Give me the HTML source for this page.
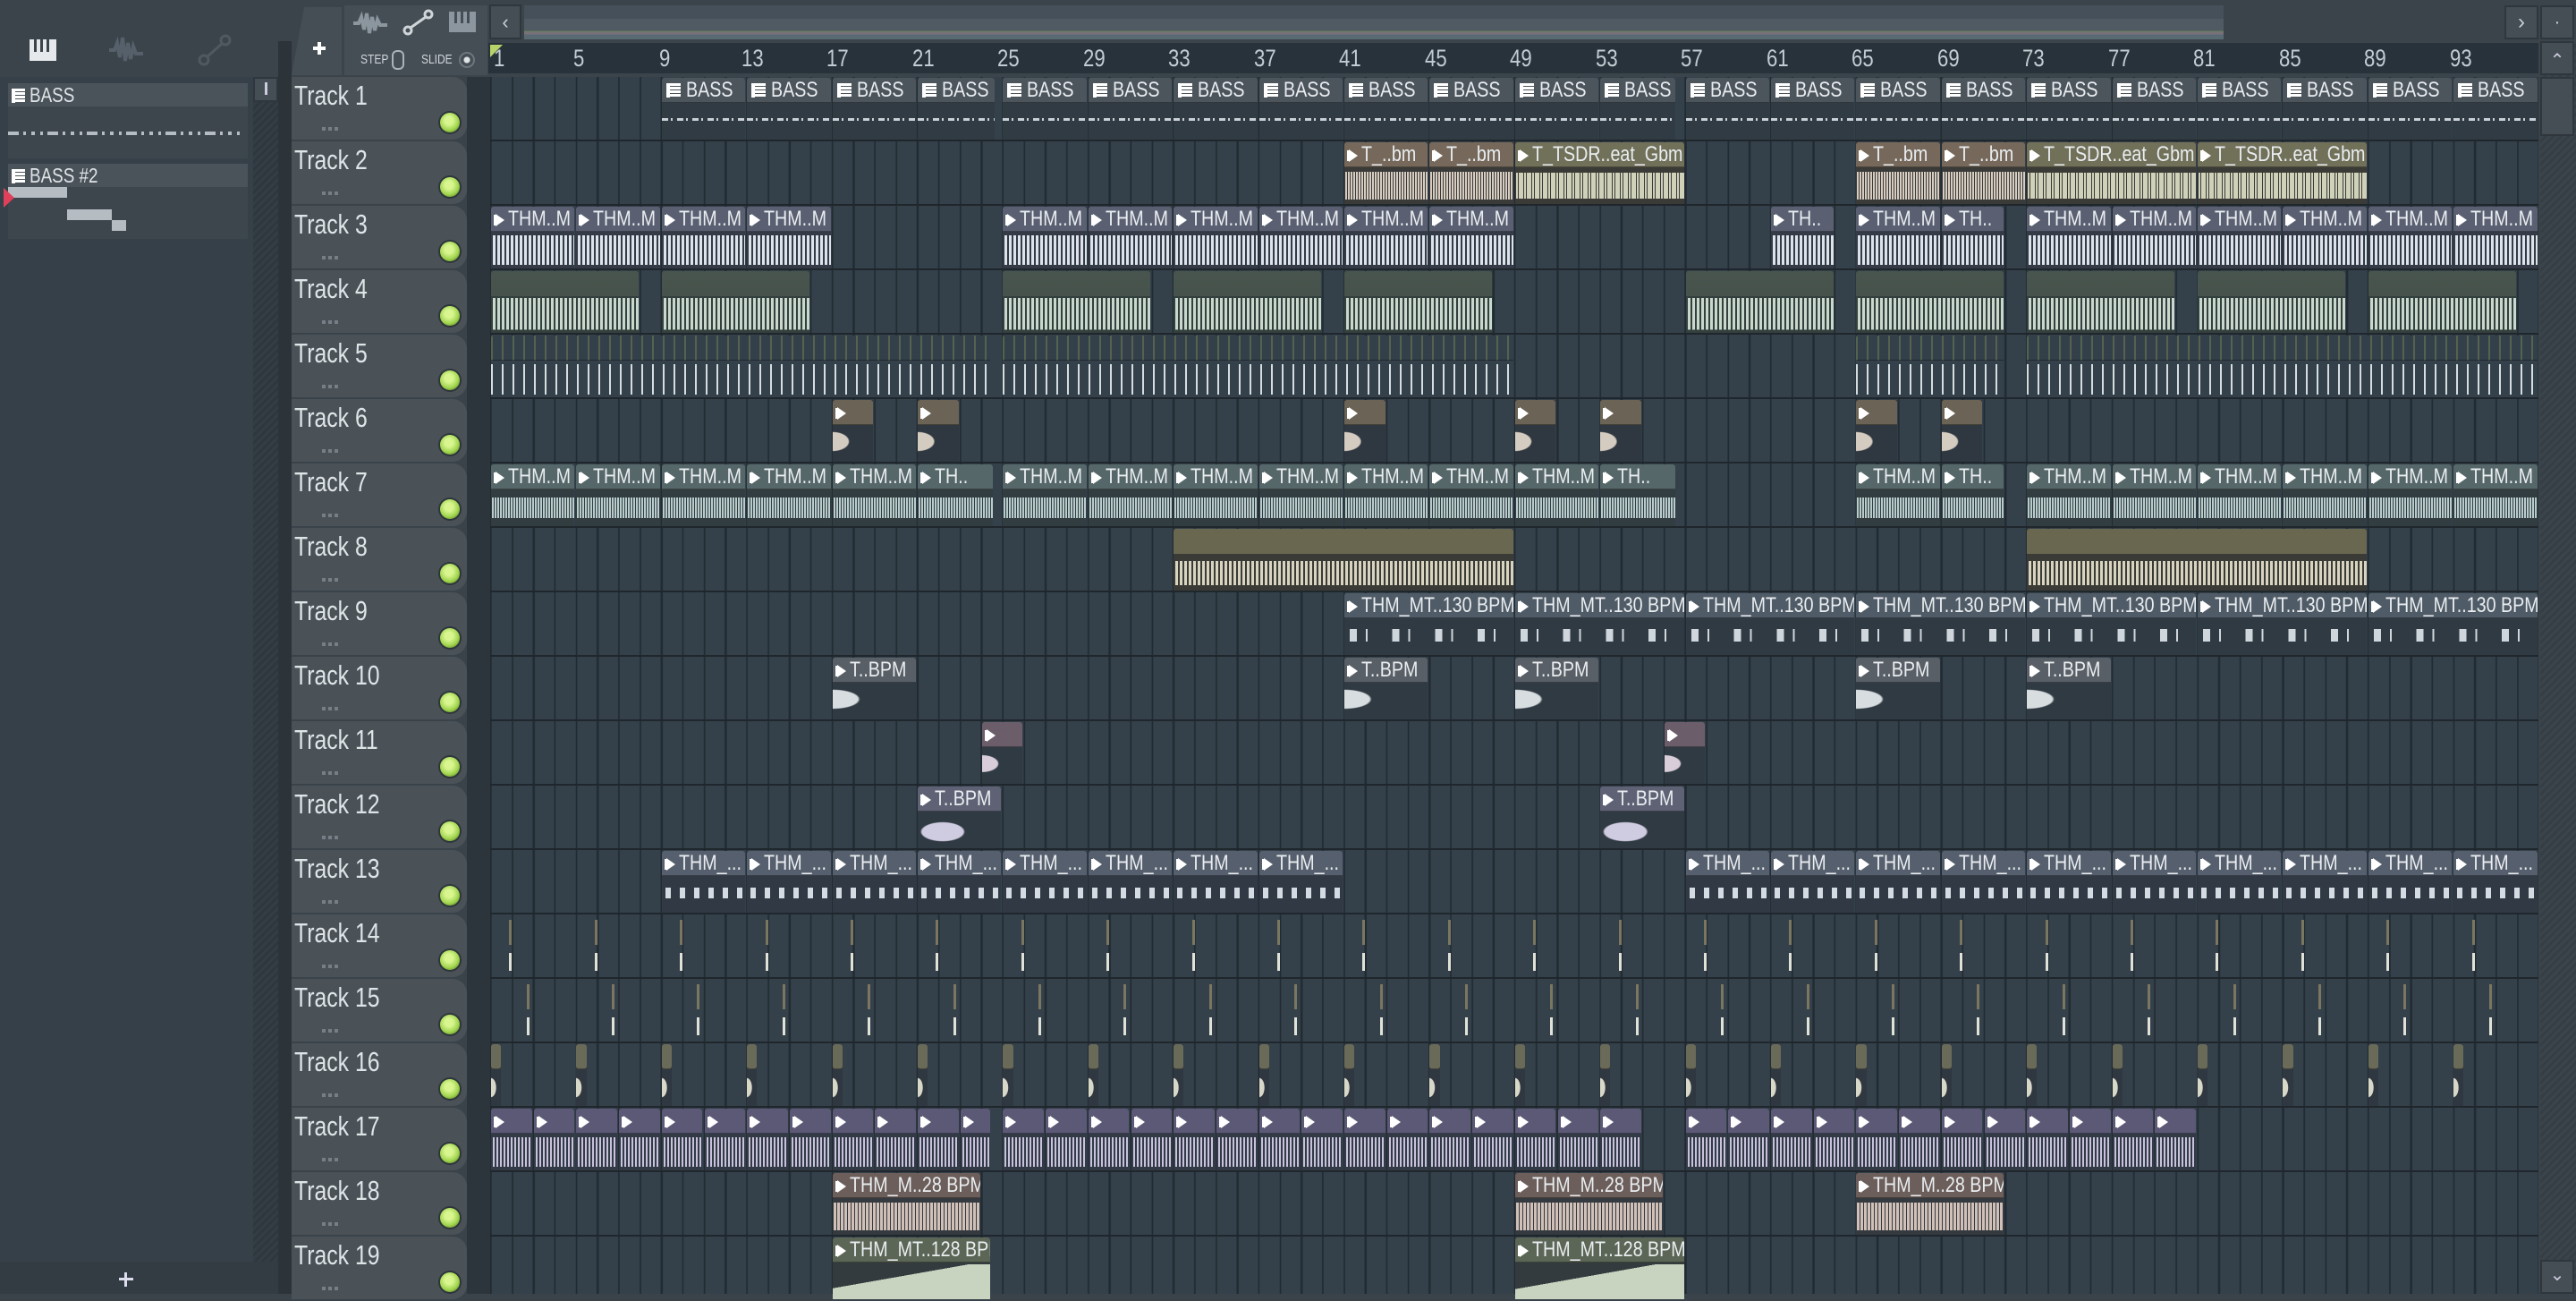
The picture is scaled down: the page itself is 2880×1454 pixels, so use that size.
<!DOCTYPE html>
<html><head><meta charset="utf-8"><style>
*{margin:0;padding:0;box-sizing:border-box}
body{width:2880px;height:1446px;overflow:hidden;background:#3a434a;font-family:"Liberation Sans",sans-serif;position:relative}
.abs{position:absolute}
.top{left:0;top:0;width:2880px;height:86px;background:#3b444b}
.ruler{left:546px;top:48px;width:2292px;height:34px;background:#28323a}
.ruler span{position:absolute;top:2px;font-size:27px;color:#c3ccd3;transform:scaleX(.82);transform-origin:0 0}
.ov{left:586px;top:6px;width:1900px;height:38px;background:linear-gradient(180deg,#45505a 0 40%,#4f5a62 40% 75%,#6d7a66 75% 80%,#7a6f80 80% 85%,#5a6a72 85%);}
.btn{background:#454e55;border:2px solid #2f373d}
.grid{left:546px;top:86px;width:2292px;height:1360px;background-color:#34414b;
background-image:repeating-linear-gradient(180deg,transparent 0 70px,#1f262c 70px 72px),repeating-linear-gradient(90deg,#222b32 0 2px,transparent 2px 23.85px);background-position:0 0,2px 0}
.lcol{left:522px;top:86px;width:26px;height:1360px;background:#2c353c}
.th{position:absolute;left:326px;width:196px;height:70px;background:#4a5258;border-radius:0 16px 16px 0}
.th em{position:absolute;left:3px;top:3px;font-style:normal;font-size:31px;color:#dfe4e7;transform:scaleX(.8);transform-origin:0 0;white-space:nowrap}
.th i{position:absolute;left:166px;top:40px;width:22px;height:22px;border-radius:50%;background:radial-gradient(circle at 45% 40%,#d8f590 0 25%,#9fd44c 60%,#6f9a30 80%);box-shadow:0 0 0 2px #2e363c}
.th u{position:absolute;left:34px;top:56px;width:18px;height:4px;background:repeating-linear-gradient(90deg,#777f86 0 4px,transparent 4px 7px)}
.r{position:absolute;left:548px;width:2290px;height:72px;overflow:hidden}
.c{position:absolute;top:1px;height:69px;left:calc((var(--b) - 1)*23.85px + 1px);width:calc(var(--w)*23.85px - 2px);display:block;font-style:normal;background:var(--bg,#2f3942)}
.c b{position:relative;z-index:2;display:block;height:28px;background:var(--h);border-radius:3px 3px 0 0;font-weight:normal;color:#e9edf0;font-size:24px;line-height:28px;white-space:nowrap;overflow:hidden;padding-left:5px;border-bottom:1px solid rgba(0,0,0,.35)}
.c b s{display:inline-block;text-decoration:none;transform:scaleX(.82);transform-origin:0 50%}
.a b::before{content:"";display:inline-block;width:0;height:0;border-left:10px solid #fff;border-top:7px solid transparent;border-bottom:7px solid transparent;margin-right:4px;vertical-align:-1px;box-shadow:-3px 0 0 -1px #fff}
.p b::before{content:"";display:inline-block;width:12px;height:16px;margin-right:6px;vertical-align:-1px;background:repeating-linear-gradient(180deg,#fff 0 3px,#4c545c 3px 4px);border-left:4px solid #fff}
.c::after{content:"";position:absolute;left:0;right:0;top:28px;bottom:0;background:var(--wv)}
.p{--h:#4c545c;--bg:#313b44;--wv:repeating-linear-gradient(90deg,#c9d0d6 0 7px,transparent 7px 10px,#c9d0d6 10px 12px,transparent 12px 17px) 0 17px/100% 3px no-repeat}
.k2b{--h:#76695b;--bg:#3a3a39;--wv:repeating-linear-gradient(90deg,#3a3a39 0 1px,transparent 1px 3px),linear-gradient(180deg,#3a3a39 12%,#d6ccc0 12% 88%,#3a3a39 88%)}
.k2o{--h:#717059;--bg:#3a3b37;--wv:repeating-linear-gradient(90deg,#3a3b37 0 1px,transparent 1px 3px,#3a3b37 3px 4px,transparent 4px 9px),linear-gradient(180deg,#3a3b37 15%,#cfd1b9 15% 85%,#3a3b37 85%)}
.k3{--h:#5a6072;--bg:#343b47;--wv:repeating-linear-gradient(90deg,#343b47 0 2px,transparent 2px 5px),linear-gradient(180deg,#343b47 10%,#dde3ea 10% 90%,#343b47 90%)}
.k4{--h:linear-gradient(180deg,#48554e,#46524b);--bg:#34403e;--wv:repeating-linear-gradient(90deg,#34403e 0 2px,transparent 2px 5px),linear-gradient(180deg,#34403e 5%,#c8d8cc 5% 92%,#34403e 92%)}
.k4 b,.k8 b{border:0}
.k5{--h:repeating-linear-gradient(90deg,#55624f 0 2px,#33404a 2px 12px);--bg:#34414b;--wv:repeating-linear-gradient(90deg,#d5dde0 0 2px,transparent 2px 12px) 0 4px/100% 34px no-repeat}
.k6{--h:#6b6355;--bg:#2f3740;--wv:radial-gradient(ellipse 70% 45% at 0 45%,#d4ccc0 55%,transparent 60%)}
.k7{--h:#56676a;--bg:#323d42;--wv:repeating-linear-gradient(90deg,#323d42 0 1px,transparent 1px 3px),linear-gradient(180deg,#323d42 22%,#b9cccc 22% 78%,#323d42 78%)}
.k8{--h:#6a6750;--bg:#3a3b36;--wv:repeating-linear-gradient(90deg,#3a3b36 0 2px,transparent 2px 5px),linear-gradient(180deg,#3a3b36 20%,#d8d4c0 20% 85%,#3a3b36 85%)}
.k9{--h:#4f5b66;--bg:#303a43;--wv:repeating-linear-gradient(90deg,transparent 0 6px,#cfd6dc 6px 14px,transparent 14px 24px,#cfd6dc 24px 26px,transparent 26px 47.7px) 0 12px/100% 14px no-repeat}
.k10{--h:#595f66;--bg:#303a43;--wv:radial-gradient(ellipse 55% 45% at 0 45%,#d8dde0 55%,transparent 60%)}
.k11{--h:#6b5e6a;--bg:#303a43;--wv:radial-gradient(ellipse 70% 40% at 0 45%,#d8cdd8 55%,transparent 60%)}
.k12{--h:#5f6275;--bg:#303a43;--wv:radial-gradient(ellipse 45% 45% at 30% 55%,#cfcbe0 55%,transparent 60%)}
.k13{--h:#565f6d;--bg:#313a44;--wv:repeating-linear-gradient(90deg,transparent 0 4px,#d4dbe2 4px 10px,transparent 10px 16px) 0 13px/100% 12px no-repeat}
.k16{--h:#6a6a58;--bg:#2f3740;--wv:radial-gradient(ellipse 90% 45% at 0 50%,#d8d8c8 55%,transparent 60%)}
.k16 b{border-radius:3px}
.k17{--h:#5b5975;--bg:#323a46;--wv:repeating-linear-gradient(90deg,#323a46 0 2px,transparent 2px 4px),linear-gradient(180deg,#323a46 10%,#c8c2dc 10% 90%,#323a46 90%)}
.k18{--h:#6c5e5a;--bg:#343a3f;--wv:repeating-linear-gradient(90deg,#343a3f 0 1px,transparent 1px 4px),linear-gradient(180deg,#343a3f 12%,#d0c0b8 12% 88%,#343a3f 88%)}
.k19{--h:#5c6656;--bg:#343b3e;--wv:linear-gradient(170deg,#343b3e 0 40%,transparent 40%),linear-gradient(180deg,#343b3e 5%,#c8d4c0 5%)}
.sp{position:absolute;top:6px;height:62px;width:3px;left:calc((var(--b) - 1)*23.85px);background:linear-gradient(180deg,#7a7660 0 45%,transparent 45% 60%,#e0e2d8 60% 92%,transparent 92%)}
.lp{left:0;top:86px;width:284px;height:1324px;background:#364048}
.ph{position:absolute;left:9px;width:268px;height:26px;background:#4b535a;color:#dfe4e7;font-size:23px;line-height:26px;padding-left:4px}
.ph s{display:inline-block;text-decoration:none;transform:scaleX(.82);transform-origin:0 50%}
.ph::before{content:"";display:inline-block;width:11px;height:16px;margin-right:5px;vertical-align:-1px;background:repeating-linear-gradient(180deg,#fff 0 3px,#4c545c 3px 4px);border-left:4px solid #fff}
.pb{position:absolute;left:9px;width:268px;height:58px;background:#3d464d}
</style></head><body>
<div class="abs top"></div>
<div class="abs" style="left:33px;top:44px;width:30px;height:24px;background:#e6e9eb"></div>
<div class="abs" style="left:38px;top:44px;width:3px;height:14px;background:#3b444b"></div>
<div class="abs" style="left:45px;top:44px;width:3px;height:14px;background:#3b444b"></div>
<div class="abs" style="left:52px;top:44px;width:3px;height:14px;background:#3b444b"></div>
<svg class="abs" style="left:120px;top:38px" width="46" height="36"><path d="M2 18h6l3-8 3 16 3-22 3 26 3-20 3 18 3-14 3 8h8" stroke="#56606a" stroke-width="4" fill="none"/></svg>
<svg class="abs" style="left:220px;top:38px" width="40" height="36"><circle cx="8" cy="29" r="5" stroke="#4f5960" stroke-width="3" fill="none"/><circle cx="32" cy="7" r="5" stroke="#4f5960" stroke-width="3" fill="none"/><path d="M11 26L29 10" stroke="#4f5960" stroke-width="3"/></svg>
<div class="abs" style="left:326px;top:8px;width:56px;height:76px;background:#454e55;border-radius:14px 0 0 0;clip-path:polygon(25% 0,100% 0,100% 100%,0 100%)"></div>
<div class="abs" style="left:350px;top:52px;width:14px;height:4px;background:#fff"></div>
<div class="abs" style="left:355px;top:47px;width:4px;height:14px;background:#fff"></div>
<div class="abs" style="left:385px;top:6px;width:160px;height:78px;background:#454e55"></div>
<svg class="abs" style="left:393px;top:10px" width="42" height="32"><path d="M2 16h6l3-7 3 14 3-18 3 22 3-18 3 15 3-12 3 6h8" stroke="#8c969e" stroke-width="4" fill="none"/></svg>
<svg class="abs" style="left:450px;top:10px" width="36" height="30"><circle cx="6" cy="24" r="4" stroke="#cfd5d9" stroke-width="3" fill="none"/><circle cx="29" cy="6" r="4" stroke="#cfd5d9" stroke-width="3" fill="none"/><path d="M9 21L26 9" stroke="#cfd5d9" stroke-width="3"/></svg>
<div class="abs" style="left:502px;top:13px;width:30px;height:23px;background:#8c969e"></div>
<div class="abs" style="left:508px;top:13px;width:3px;height:13px;background:#454e55"></div>
<div class="abs" style="left:515px;top:13px;width:3px;height:13px;background:#454e55"></div>
<div class="abs" style="left:522px;top:13px;width:3px;height:13px;background:#454e55"></div>
<div class="abs" style="left:403px;top:58px;font-size:15px;color:#cfd5d9;transform:scaleX(.8);transform-origin:0 0">STEP</div>
<div class="abs" style="left:438px;top:56px;width:14px;height:22px;border:2px solid #aab3ba;border-radius:6px"></div>
<div class="abs" style="left:471px;top:58px;font-size:15px;color:#cfd5d9;transform:scaleX(.8);transform-origin:0 0">SLIDE</div>
<div class="abs" style="left:513px;top:58px;width:18px;height:18px;border:2px solid #6c767d;border-radius:50%;background:radial-gradient(#dfe4e7 0 3px,#454e55 4px)"></div>
<div class="abs btn" style="left:547px;top:5px;width:36px;height:39px;color:#ccd;font-size:22px;text-align:center;line-height:36px">&#8249;</div>
<div class="abs ov"></div>
<div class="abs" style="left:2486px;top:6px;width:314px;height:38px;background:#3b444b"></div>
<div class="abs btn" style="left:2800px;top:6px;width:38px;height:38px;color:#ccd;font-size:24px;text-align:center;line-height:34px">&#8250;</div>
<div class="abs btn" style="left:2840px;top:6px;width:38px;height:38px;color:#ccd;font-size:20px;text-align:center;line-height:34px">&#183;</div>
<div class="abs ruler">
<span style="left:6px">1</span><span style="left:95px">5</span><span style="left:191px">9</span><span style="left:283px">13</span><span style="left:378px">17</span><span style="left:474px">21</span><span style="left:569px">25</span><span style="left:665px">29</span><span style="left:760px">33</span><span style="left:856px">37</span><span style="left:951px">41</span><span style="left:1047px">45</span><span style="left:1142px">49</span><span style="left:1238px">53</span><span style="left:1333px">57</span><span style="left:1429px">61</span><span style="left:1524px">65</span><span style="left:1620px">69</span><span style="left:1715px">73</span><span style="left:1811px">77</span><span style="left:1906px">81</span><span style="left:2002px">85</span><span style="left:2097px">89</span><span style="left:2193px">93</span>
</div>
<div class="abs" style="left:548px;top:50px;width:0;height:0;border-left:14px solid #b6d46a;border-bottom:14px solid transparent"></div>
<div class="abs" style="left:2840px;top:46px;width:40px;height:1400px;background:repeating-linear-gradient(135deg,#353e45 0 3px,#3b444b 3px 6px)"></div>
<div class="abs btn" style="left:2840px;top:46px;width:38px;height:38px;color:#ccd;font-size:20px;text-align:center;line-height:40px">&#8963;</div>
<div class="abs btn" style="left:2840px;top:86px;width:38px;height:66px"></div>
<div class="abs btn" style="left:2840px;top:1408px;width:38px;height:38px;color:#ccd;font-size:20px;text-align:center;line-height:30px">&#8964;</div>
<div class="abs lp">
<div class="ph" style="top:7px"><s>BASS</s></div>
<div class="pb" style="top:33px"><div class="abs" style="left:0;top:28px;width:262px;height:4px;background:repeating-linear-gradient(90deg,#b5bcc2 0 12px,transparent 12px 17px,#b5bcc2 17px 20px,transparent 20px 26px,#b5bcc2 26px 30px,transparent 30px 36px,#b5bcc2 36px 39px,transparent 39px 44px)"></div></div>
<div class="ph" style="top:97px"><s>BASS #2</s></div>
<div class="pb" style="top:123px">
<div class="abs" style="left:0;top:0;width:66px;height:12px;background:#b5bcc2"></div>
<div class="abs" style="left:66px;top:25px;width:50px;height:12px;background:#b5bcc2"></div>
<div class="abs" style="left:116px;top:37px;width:16px;height:12px;background:#b5bcc2"></div>
</div>
<div class="abs" style="left:4px;top:124px;width:0;height:0;border-left:12px solid #e0405a;border-top:11px solid transparent;border-bottom:11px solid transparent"></div>
</div>
<div class="abs" style="left:283px;top:86px;width:28px;height:1324px;background:repeating-linear-gradient(135deg,#2e373e 0 3px,#343d44 3px 6px)"></div>
<div class="abs btn" style="left:283px;top:86px;width:28px;height:28px"></div>
<div class="abs" style="left:296px;top:92px;width:3px;height:14px;background:#ccd"></div>
<div class="abs" style="left:0;top:1410px;width:320px;height:36px;background:#333c43"></div>
<div class="abs" style="left:133px;top:1428px;width:16px;height:3px;background:#dde"></div>
<div class="abs" style="left:139px;top:1422px;width:3px;height:16px;background:#dde"></div>
<div class="abs" style="left:311px;top:46px;width:15px;height:1400px;background:#2c343a"></div>
<div class="abs grid"></div>
<div class="abs lcol"></div>

<div class="th" style="top:86px"><em>Track 1</em><u></u><i></i></div>
<div class="th" style="top:158px"><em>Track 2</em><u></u><i></i></div>
<div class="th" style="top:230px"><em>Track 3</em><u></u><i></i></div>
<div class="th" style="top:302px"><em>Track 4</em><u></u><i></i></div>
<div class="th" style="top:374px"><em>Track 5</em><u></u><i></i></div>
<div class="th" style="top:446px"><em>Track 6</em><u></u><i></i></div>
<div class="th" style="top:518px"><em>Track 7</em><u></u><i></i></div>
<div class="th" style="top:590px"><em>Track 8</em><u></u><i></i></div>
<div class="th" style="top:662px"><em>Track 9</em><u></u><i></i></div>
<div class="th" style="top:734px"><em>Track 10</em><u></u><i></i></div>
<div class="th" style="top:806px"><em>Track 11</em><u></u><i></i></div>
<div class="th" style="top:878px"><em>Track 12</em><u></u><i></i></div>
<div class="th" style="top:950px"><em>Track 13</em><u></u><i></i></div>
<div class="th" style="top:1022px"><em>Track 14</em><u></u><i></i></div>
<div class="th" style="top:1094px"><em>Track 15</em><u></u><i></i></div>
<div class="th" style="top:1166px"><em>Track 16</em><u></u><i></i></div>
<div class="th" style="top:1238px"><em>Track 17</em><u></u><i></i></div>
<div class="th" style="top:1310px"><em>Track 18</em><u></u><i></i></div>
<div class="th" style="top:1382px"><em>Track 19</em><u></u><i></i></div>

<div class="r" style="top:86px">
<i class="c p" style="--b:9;--w:4"><b><s>BASS</s></b></i><i class="c p" style="--b:13;--w:4"><b><s>BASS</s></b></i><i class="c p" style="--b:17;--w:4"><b><s>BASS</s></b></i><i class="c p" style="--b:21;--w:3.7"><b><s>BASS</s></b></i>
<i class="c p" style="--b:25;--w:4"><b><s>BASS</s></b></i><i class="c p" style="--b:29;--w:4"><b><s>BASS</s></b></i><i class="c p" style="--b:33;--w:4"><b><s>BASS</s></b></i><i class="c p" style="--b:37;--w:4"><b><s>BASS</s></b></i><i class="c p" style="--b:41;--w:4"><b><s>BASS</s></b></i><i class="c p" style="--b:45;--w:4"><b><s>BASS</s></b></i><i class="c p" style="--b:49;--w:4"><b><s>BASS</s></b></i><i class="c p" style="--b:53;--w:3.6"><b><s>BASS</s></b></i>
<i class="c p" style="--b:57;--w:4"><b><s>BASS</s></b></i><i class="c p" style="--b:61;--w:4"><b><s>BASS</s></b></i><i class="c p" style="--b:65;--w:4"><b><s>BASS</s></b></i><i class="c p" style="--b:69;--w:4"><b><s>BASS</s></b></i><i class="c p" style="--b:73;--w:4"><b><s>BASS</s></b></i><i class="c p" style="--b:77;--w:4"><b><s>BASS</s></b></i><i class="c p" style="--b:81;--w:4"><b><s>BASS</s></b></i><i class="c p" style="--b:85;--w:4"><b><s>BASS</s></b></i><i class="c p" style="--b:89;--w:4"><b><s>BASS</s></b></i><i class="c p" style="--b:93;--w:4"><b><s>BASS</s></b></i>
</div>
<div class="r" style="top:158px">
<i class="c a k2b" style="--b:41;--w:4"><b><s>T_..bm</s></b></i><i class="c a k2b" style="--b:45;--w:4"><b><s>T_..bm</s></b></i><i class="c a k2o" style="--b:49;--w:8"><b><s>T_TSDR..eat_Gbm</s></b></i>
<i class="c a k2b" style="--b:65;--w:4"><b><s>T_..bm</s></b></i><i class="c a k2b" style="--b:69;--w:4"><b><s>T_..bm</s></b></i><i class="c a k2o" style="--b:73;--w:8"><b><s>T_TSDR..eat_Gbm</s></b></i><i class="c a k2o" style="--b:81;--w:8"><b><s>T_TSDR..eat_Gbm</s></b></i>
</div>
<div class="r" style="top:230px">
<i class="c a k3" style="--b:1;--w:4"><b><s>THM..M</s></b></i><i class="c a k3" style="--b:5;--w:4"><b><s>THM..M</s></b></i><i class="c a k3" style="--b:9;--w:4"><b><s>THM..M</s></b></i><i class="c a k3" style="--b:13;--w:4"><b><s>THM..M</s></b></i>
<i class="c a k3" style="--b:25;--w:4"><b><s>THM..M</s></b></i><i class="c a k3" style="--b:29;--w:4"><b><s>THM..M</s></b></i><i class="c a k3" style="--b:33;--w:4"><b><s>THM..M</s></b></i><i class="c a k3" style="--b:37;--w:4"><b><s>THM..M</s></b></i><i class="c a k3" style="--b:41;--w:4"><b><s>THM..M</s></b></i><i class="c a k3" style="--b:45;--w:4"><b><s>THM..M</s></b></i>
<i class="c a k3" style="--b:61;--w:3"><b><s>TH..</s></b></i><i class="c a k3" style="--b:65;--w:4"><b><s>THM..M</s></b></i><i class="c a k3" style="--b:69;--w:3"><b><s>TH..</s></b></i>
<i class="c a k3" style="--b:73;--w:4"><b><s>THM..M</s></b></i><i class="c a k3" style="--b:77;--w:4"><b><s>THM..M</s></b></i><i class="c a k3" style="--b:81;--w:4"><b><s>THM..M</s></b></i><i class="c a k3" style="--b:85;--w:4"><b><s>THM..M</s></b></i><i class="c a k3" style="--b:89;--w:4"><b><s>THM..M</s></b></i><i class="c a k3" style="--b:93;--w:4"><b><s>THM..M</s></b></i>
</div>
<div class="r" style="top:302px">
<i class="c k4" style="--b:1;--w:7"><b></b></i><i class="c k4" style="--b:9;--w:7"><b></b></i><i class="c k4" style="--b:25;--w:7"><b></b></i><i class="c k4" style="--b:33;--w:7"><b></b></i><i class="c k4" style="--b:41;--w:7"><b></b></i><i class="c k4" style="--b:57;--w:7"><b></b></i><i class="c k4" style="--b:65;--w:7"><b></b></i><i class="c k4" style="--b:73;--w:7"><b></b></i><i class="c k4" style="--b:81;--w:7"><b></b></i><i class="c k4" style="--b:89;--w:7"><b></b></i>
</div>
<div class="r" style="top:374px">
<i class="c k5" style="--b:1;--w:23.5"><b></b></i><i class="c k5" style="--b:25;--w:24"><b></b></i><i class="c k5" style="--b:65;--w:7"><b></b></i><i class="c k5" style="--b:73;--w:24"><b></b></i>
</div>
<div class="r" style="top:446px">
<i class="c a k6" style="--b:17;--w:2"><b></b></i><i class="c a k6" style="--b:21;--w:2"><b></b></i><i class="c a k6" style="--b:41;--w:2"><b></b></i><i class="c a k6" style="--b:49;--w:2"><b></b></i><i class="c a k6" style="--b:53;--w:2"><b></b></i><i class="c a k6" style="--b:65;--w:2"><b></b></i><i class="c a k6" style="--b:69;--w:2"><b></b></i>
</div>
<div class="r" style="top:518px">
<i class="c a k7" style="--b:1;--w:4"><b><s>THM..M</s></b></i><i class="c a k7" style="--b:5;--w:4"><b><s>THM..M</s></b></i><i class="c a k7" style="--b:9;--w:4"><b><s>THM..M</s></b></i><i class="c a k7" style="--b:13;--w:4"><b><s>THM..M</s></b></i><i class="c a k7" style="--b:17;--w:4"><b><s>THM..M</s></b></i><i class="c a k7" style="--b:21;--w:3.6"><b><s>TH..</s></b></i>
<i class="c a k7" style="--b:25;--w:4"><b><s>THM..M</s></b></i><i class="c a k7" style="--b:29;--w:4"><b><s>THM..M</s></b></i><i class="c a k7" style="--b:33;--w:4"><b><s>THM..M</s></b></i><i class="c a k7" style="--b:37;--w:4"><b><s>THM..M</s></b></i><i class="c a k7" style="--b:41;--w:4"><b><s>THM..M</s></b></i><i class="c a k7" style="--b:45;--w:4"><b><s>THM..M</s></b></i><i class="c a k7" style="--b:49;--w:4"><b><s>THM..M</s></b></i><i class="c a k7" style="--b:53;--w:3.6"><b><s>TH..</s></b></i>
<i class="c a k7" style="--b:65;--w:4"><b><s>THM..M</s></b></i><i class="c a k7" style="--b:69;--w:3"><b><s>TH..</s></b></i>
<i class="c a k7" style="--b:73;--w:4"><b><s>THM..M</s></b></i><i class="c a k7" style="--b:77;--w:4"><b><s>THM..M</s></b></i><i class="c a k7" style="--b:81;--w:4"><b><s>THM..M</s></b></i><i class="c a k7" style="--b:85;--w:4"><b><s>THM..M</s></b></i><i class="c a k7" style="--b:89;--w:4"><b><s>THM..M</s></b></i><i class="c a k7" style="--b:93;--w:4"><b><s>THM..M</s></b></i>
</div>
<div class="r" style="top:590px">
<i class="c k8" style="--b:33;--w:16"><b></b></i><i class="c k8" style="--b:73;--w:16"><b></b></i>
</div>
<div class="r" style="top:662px">
<i class="c a k9" style="--b:41;--w:8"><b><s>THM_MT..130 BPM</s></b></i><i class="c a k9" style="--b:49;--w:8"><b><s>THM_MT..130 BPM</s></b></i><i class="c a k9" style="--b:57;--w:8"><b><s>THM_MT..130 BPM</s></b></i><i class="c a k9" style="--b:65;--w:8"><b><s>THM_MT..130 BPM</s></b></i><i class="c a k9" style="--b:73;--w:8"><b><s>THM_MT..130 BPM</s></b></i><i class="c a k9" style="--b:81;--w:8"><b><s>THM_MT..130 BPM</s></b></i><i class="c a k9" style="--b:89;--w:8"><b><s>THM_MT..130 BPM</s></b></i>
</div>
<div class="r" style="top:734px">
<i class="c a k10" style="--b:17;--w:4"><b><s>T..BPM</s></b></i><i class="c a k10" style="--b:41;--w:4"><b><s>T..BPM</s></b></i><i class="c a k10" style="--b:49;--w:4"><b><s>T..BPM</s></b></i><i class="c a k10" style="--b:65;--w:4"><b><s>T..BPM</s></b></i><i class="c a k10" style="--b:73;--w:4"><b><s>T..BPM</s></b></i>
</div>
<div class="r" style="top:806px">
<i class="c a k11" style="--b:24;--w:2"><b></b></i><i class="c a k11" style="--b:56;--w:2"><b></b></i>
</div>
<div class="r" style="top:878px">
<i class="c a k12" style="--b:21;--w:4"><b><s>T..BPM</s></b></i><i class="c a k12" style="--b:53;--w:4"><b><s>T..BPM</s></b></i>
</div>
<div class="r" style="top:950px">
<i class="c a k13" style="--b:9;--w:4"><b><s>THM_...</s></b></i><i class="c a k13" style="--b:13;--w:4"><b><s>THM_...</s></b></i><i class="c a k13" style="--b:17;--w:4"><b><s>THM_...</s></b></i><i class="c a k13" style="--b:21;--w:4"><b><s>THM_...</s></b></i><i class="c a k13" style="--b:25;--w:4"><b><s>THM_...</s></b></i><i class="c a k13" style="--b:29;--w:4"><b><s>THM_...</s></b></i><i class="c a k13" style="--b:33;--w:4"><b><s>THM_...</s></b></i><i class="c a k13" style="--b:37;--w:4"><b><s>THM_...</s></b></i>
<i class="c a k13" style="--b:57;--w:4"><b><s>THM_...</s></b></i><i class="c a k13" style="--b:61;--w:4"><b><s>THM_...</s></b></i><i class="c a k13" style="--b:65;--w:4"><b><s>THM_...</s></b></i><i class="c a k13" style="--b:69;--w:4"><b><s>THM_...</s></b></i><i class="c a k13" style="--b:73;--w:4"><b><s>THM_...</s></b></i><i class="c a k13" style="--b:77;--w:4"><b><s>THM_...</s></b></i><i class="c a k13" style="--b:81;--w:4"><b><s>THM_...</s></b></i><i class="c a k13" style="--b:85;--w:4"><b><s>THM_...</s></b></i><i class="c a k13" style="--b:89;--w:4"><b><s>THM_...</s></b></i><i class="c a k13" style="--b:93;--w:4"><b><s>THM_...</s></b></i>
</div>
<div class="r" style="top:1022px">
<i class="sp" style="--b:1.9"></i><i class="sp" style="--b:5.9"></i><i class="sp" style="--b:9.9"></i><i class="sp" style="--b:13.9"></i><i class="sp" style="--b:17.9"></i><i class="sp" style="--b:21.9"></i><i class="sp" style="--b:25.9"></i><i class="sp" style="--b:29.9"></i><i class="sp" style="--b:33.9"></i><i class="sp" style="--b:37.9"></i><i class="sp" style="--b:41.9"></i><i class="sp" style="--b:45.9"></i><i class="sp" style="--b:49.9"></i><i class="sp" style="--b:53.9"></i><i class="sp" style="--b:57.9"></i><i class="sp" style="--b:61.9"></i><i class="sp" style="--b:65.9"></i><i class="sp" style="--b:69.9"></i><i class="sp" style="--b:73.9"></i><i class="sp" style="--b:77.9"></i><i class="sp" style="--b:81.9"></i><i class="sp" style="--b:85.9"></i><i class="sp" style="--b:89.9"></i><i class="sp" style="--b:93.9"></i>
</div>
<div class="r" style="top:1094px">
<i class="sp" style="--b:2.7"></i><i class="sp" style="--b:6.7"></i><i class="sp" style="--b:10.7"></i><i class="sp" style="--b:14.7"></i><i class="sp" style="--b:18.7"></i><i class="sp" style="--b:22.7"></i><i class="sp" style="--b:26.7"></i><i class="sp" style="--b:30.7"></i><i class="sp" style="--b:34.7"></i><i class="sp" style="--b:38.7"></i><i class="sp" style="--b:42.7"></i><i class="sp" style="--b:46.7"></i><i class="sp" style="--b:50.7"></i><i class="sp" style="--b:54.7"></i><i class="sp" style="--b:58.7"></i><i class="sp" style="--b:62.7"></i><i class="sp" style="--b:66.7"></i><i class="sp" style="--b:70.7"></i><i class="sp" style="--b:74.7"></i><i class="sp" style="--b:78.7"></i><i class="sp" style="--b:82.7"></i><i class="sp" style="--b:86.7"></i><i class="sp" style="--b:90.7"></i><i class="sp" style="--b:94.7"></i>
</div>
<div class="r" style="top:1166px">
<i class="c k16" style="--b:1;--w:.55"><b></b></i><i class="c k16" style="--b:5;--w:.55"><b></b></i><i class="c k16" style="--b:9;--w:.55"><b></b></i><i class="c k16" style="--b:13;--w:.55"><b></b></i><i class="c k16" style="--b:17;--w:.55"><b></b></i><i class="c k16" style="--b:21;--w:.55"><b></b></i><i class="c k16" style="--b:25;--w:.55"><b></b></i><i class="c k16" style="--b:29;--w:.55"><b></b></i><i class="c k16" style="--b:33;--w:.55"><b></b></i><i class="c k16" style="--b:37;--w:.55"><b></b></i><i class="c k16" style="--b:41;--w:.55"><b></b></i><i class="c k16" style="--b:45;--w:.55"><b></b></i><i class="c k16" style="--b:49;--w:.55"><b></b></i><i class="c k16" style="--b:53;--w:.55"><b></b></i><i class="c k16" style="--b:57;--w:.55"><b></b></i><i class="c k16" style="--b:61;--w:.55"><b></b></i><i class="c k16" style="--b:65;--w:.55"><b></b></i><i class="c k16" style="--b:69;--w:.55"><b></b></i><i class="c k16" style="--b:73;--w:.55"><b></b></i><i class="c k16" style="--b:77;--w:.55"><b></b></i><i class="c k16" style="--b:81;--w:.55"><b></b></i><i class="c k16" style="--b:85;--w:.55"><b></b></i><i class="c k16" style="--b:89;--w:.55"><b></b></i><i class="c k16" style="--b:93;--w:.55"><b></b></i>
</div>
<div class="r" style="top:1238px">
<i class="c a k17" style="--b:1;--w:2"><b></b></i><i class="c a k17" style="--b:3;--w:2"><b></b></i><i class="c a k17" style="--b:5;--w:2"><b></b></i><i class="c a k17" style="--b:7;--w:2"><b></b></i><i class="c a k17" style="--b:9;--w:2"><b></b></i><i class="c a k17" style="--b:11;--w:2"><b></b></i><i class="c a k17" style="--b:13;--w:2"><b></b></i><i class="c a k17" style="--b:15;--w:2"><b></b></i><i class="c a k17" style="--b:17;--w:2"><b></b></i><i class="c a k17" style="--b:19;--w:2"><b></b></i><i class="c a k17" style="--b:21;--w:2"><b></b></i><i class="c a k17" style="--b:23;--w:1.5"><b></b></i>
<i class="c a k17" style="--b:25;--w:2"><b></b></i><i class="c a k17" style="--b:27;--w:2"><b></b></i><i class="c a k17" style="--b:29;--w:2"><b></b></i><i class="c a k17" style="--b:31;--w:2"><b></b></i><i class="c a k17" style="--b:33;--w:2"><b></b></i><i class="c a k17" style="--b:35;--w:2"><b></b></i><i class="c a k17" style="--b:37;--w:2"><b></b></i><i class="c a k17" style="--b:39;--w:2"><b></b></i><i class="c a k17" style="--b:41;--w:2"><b></b></i><i class="c a k17" style="--b:43;--w:2"><b></b></i><i class="c a k17" style="--b:45;--w:2"><b></b></i><i class="c a k17" style="--b:47;--w:2"><b></b></i><i class="c a k17" style="--b:49;--w:2"><b></b></i><i class="c a k17" style="--b:51;--w:2"><b></b></i><i class="c a k17" style="--b:53;--w:2"><b></b></i>
<i class="c a k17" style="--b:57;--w:2"><b></b></i><i class="c a k17" style="--b:59;--w:2"><b></b></i><i class="c a k17" style="--b:61;--w:2"><b></b></i><i class="c a k17" style="--b:63;--w:2"><b></b></i><i class="c a k17" style="--b:65;--w:2"><b></b></i><i class="c a k17" style="--b:67;--w:2"><b></b></i><i class="c a k17" style="--b:69;--w:2"><b></b></i><i class="c a k17" style="--b:71;--w:2"><b></b></i><i class="c a k17" style="--b:73;--w:2"><b></b></i><i class="c a k17" style="--b:75;--w:2"><b></b></i><i class="c a k17" style="--b:77;--w:2"><b></b></i><i class="c a k17" style="--b:79;--w:2"><b></b></i>
</div>
<div class="r" style="top:1310px">
<i class="c a k18" style="--b:17;--w:7"><b><s>THM_M..28 BPM</s></b></i><i class="c a k18" style="--b:49;--w:7"><b><s>THM_M..28 BPM</s></b></i><i class="c a k18" style="--b:65;--w:7"><b><s>THM_M..28 BPM</s></b></i>
</div>
<div class="r" style="top:1382px">
<i class="c a k19" style="--b:17;--w:7.5"><b><s>THM_MT..128 BPM</s></b></i><i class="c a k19" style="--b:49;--w:8"><b><s>THM_MT..128 BPM</s></b></i>
</div>
</body></html>
